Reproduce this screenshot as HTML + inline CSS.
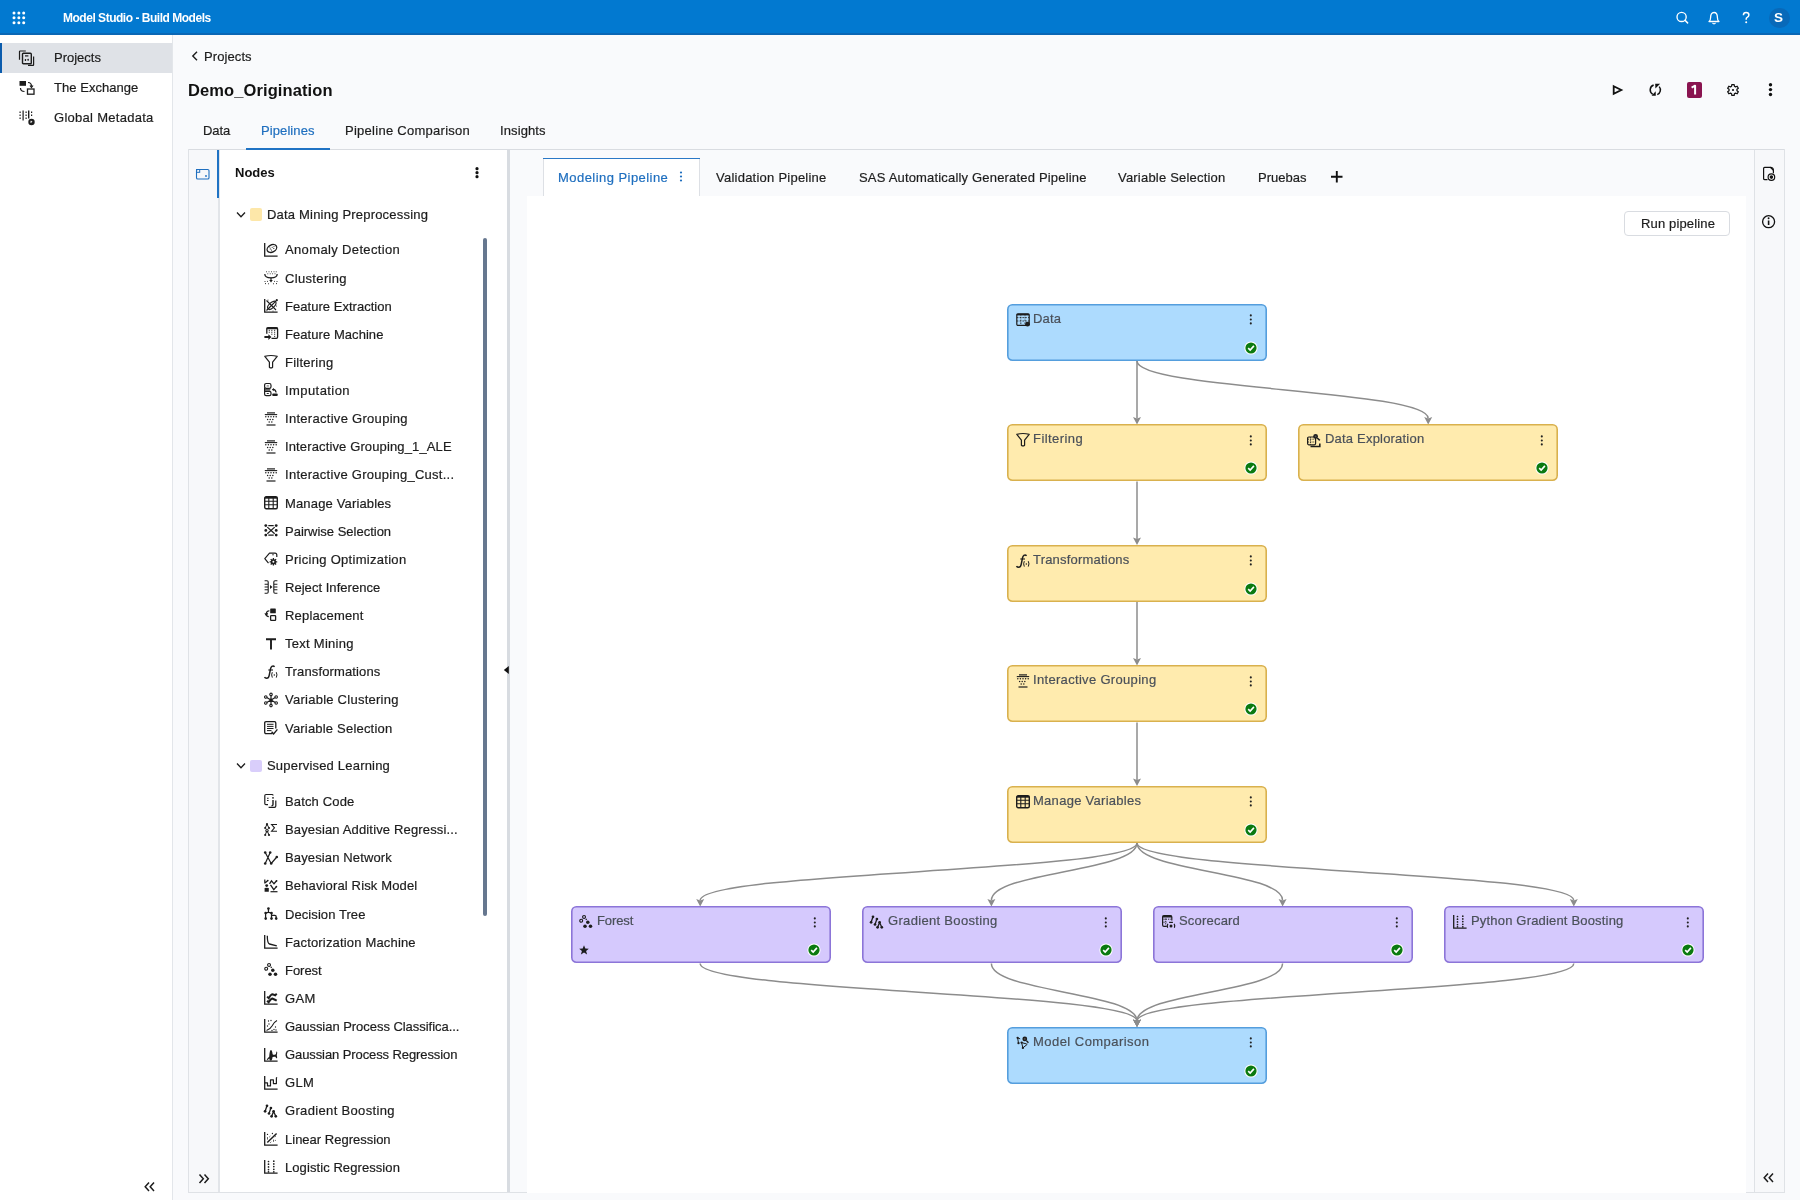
<!DOCTYPE html>
<html><head><meta charset="utf-8"><title>Model Studio - Build Models</title>
<style>
html,body{margin:0;padding:0;width:1800px;height:1200px;overflow:hidden;background:#f8f9fb}
body{position:relative;font-family:"Liberation Sans",sans-serif;-webkit-font-smoothing:antialiased}
.t{position:absolute;white-space:nowrap;line-height:1;font-family:"Liberation Sans",sans-serif;will-change:transform;-webkit-text-stroke:0.2px currentColor}
svg{overflow:visible}
</style></head><body>
<div style="position:absolute;left:0px;top:0px;width:1800px;height:1200px;background:#f9fafc"></div>
<div style="position:absolute;left:0px;top:0px;width:1800px;height:35px;background:#0279d0"></div>
<div style="position:absolute;left:0px;top:33px;width:1800px;height:2px;background:#0a67b5"></div>
<div style="position:absolute;left:0px;top:35px;width:172px;height:1165px;background:#ffffff"></div>
<div style="position:absolute;left:172px;top:35px;width:1px;height:1165px;background:#e3e6ea"></div>
<div style="position:absolute;left:0px;top:43px;width:172px;height:30px;background:#dfe2e7"></div>
<div style="position:absolute;left:0px;top:43px;width:2px;height:30px;background:#0b5cad"></div>
<svg style="position:absolute;left:11.5px;top:10.5px;" width="15" height="15" viewBox="0 0 15 15"><circle cx="2.00" cy="2.00" r="1.5" fill="#fff"/><circle cx="2.00" cy="6.85" r="1.5" fill="#fff"/><circle cx="2.00" cy="11.70" r="1.5" fill="#fff"/><circle cx="6.85" cy="2.00" r="1.5" fill="#fff"/><circle cx="6.85" cy="6.85" r="1.5" fill="#fff"/><circle cx="6.85" cy="11.70" r="1.5" fill="#fff"/><circle cx="11.70" cy="2.00" r="1.5" fill="#fff"/><circle cx="11.70" cy="6.85" r="1.5" fill="#fff"/><circle cx="11.70" cy="11.70" r="1.5" fill="#fff"/></svg>
<div class="t" style="left:63.00px;top:11.84px;font-size:12px;font-weight:700;color:#ffffff;letter-spacing:-0.48px;-webkit-text-stroke:0;">Model Studio - Build Models</div>
<svg style="position:absolute;left:1674px;top:10px;" width="16" height="16" viewBox="0 0 16 16"><circle cx="7.6" cy="6.9" r="4.6" fill="none" stroke="#fff" stroke-width="1.35"/><line x1="11" y1="10.3" x2="13.6" y2="12.9" stroke="#fff" stroke-width="1.5" stroke-linecap="round"/></svg>
<svg style="position:absolute;left:1706px;top:10px;" width="16" height="16" viewBox="0 0 16 16"><path d="M3 11.5 Q4.6 10.5 4.6 7.5 Q4.6 2.5 8 2.5 Q11.4 2.5 11.4 7.5 Q11.4 10.5 13 11.5 Z" fill="none" stroke="#fff" stroke-width="1.3" stroke-linejoin="round"/><path d="M6.3 13.2 Q8 14.8 9.7 13.2" fill="#fff" stroke="#fff" stroke-width="1"/></svg>
<svg style="position:absolute;left:1740px;top:10px;" width="12" height="16" viewBox="0 0 12 16"><path d="M3.4 5.3 Q3.4 2.6 6.1 2.6 Q8.9 2.6 8.9 5 Q8.9 6.6 6.9 7.6 Q6.2 8 6.2 9 V9.8" fill="none" stroke="#fff" stroke-width="1.5"/><circle cx="6.2" cy="12.2" r="1" fill="#fff"/></svg>
<div style="position:absolute;left:1769px;top:7.5px;width:20.5px;height:20.5px;background:#0869b9;border-radius:50%"></div>
<div class="t" style="left:1774.20px;top:10.77px;font-size:13.5px;font-weight:700;color:#ffffff;letter-spacing:0px;-webkit-text-stroke:0;">S</div>
<div class="t" style="left:54.30px;top:51.30px;font-size:13px;font-weight:400;color:#1d1d1d;letter-spacing:0px;">Projects</div>
<div class="t" style="left:53.60px;top:81.20px;font-size:13px;font-weight:400;color:#1d1d1d;letter-spacing:0.04px;">The Exchange</div>
<div class="t" style="left:54.00px;top:111.40px;font-size:13px;font-weight:400;color:#1d1d1d;letter-spacing:0.28px;">Global Metadata</div>
<svg style="position:absolute;left:18px;top:49px;" width="18" height="18" viewBox="0 0 18 18"><path d="M1.5 10.8 V2.6 Q1.5 2 2.2 2 H7.8" fill="none" stroke="#1d1d1d" stroke-width="1.2"/><rect x="4.5" y="4.3" width="8.8" height="10.5" rx="0.9" fill="none" stroke="#1d1d1d" stroke-width="1.4"/><path d="M10 16.4 H15.1 Q15.6 16.4 15.6 15.8 V7.5" fill="none" stroke="#1d1d1d" stroke-width="1.2"/><path d="M7 6.9 H10.4" fill="none" stroke="#1d1d1d" stroke-width="1.2"/><rect x="6.8" y="9.9" width="1.3" height="2" rx="0.5" fill="#1d1d1d"/><rect x="9.5" y="9.7" width="1.3" height="2" rx="0.5" fill="#1d1d1d"/></svg>
<svg style="position:absolute;left:18px;top:79px;" width="18" height="18" viewBox="0 0 18 18"><rect x="1.5" y="2" width="6.5" height="4.8" fill="#1d1d1d"/><rect x="9.5" y="10" width="6.5" height="5.2" fill="none" stroke="#1d1d1d" stroke-width="1.3"/><path d="M10 3.5 Q13.5 3.5 13.5 7.5" fill="none" stroke="#1d1d1d" stroke-width="1.2"/><path d="M2.5 9 Q2.5 12.5 6.5 12.5" fill="none" stroke="#1d1d1d" stroke-width="1.2"/><path d="M12 6.5 L13.5 8.5 L15 6.5" fill="none" stroke="#1d1d1d" stroke-width="1.2"/></svg>
<svg style="position:absolute;left:18px;top:109px;" width="18" height="18" viewBox="0 0 18 18"><g fill="#1d1d1d"><rect x="1.5" y="2.5" width="1.2" height="1.5"/><rect x="1.5" y="5.5" width="1.2" height="1.5"/><rect x="1.5" y="8.5" width="1.2" height="1.5"/><rect x="4.5" y="1.5" width="1.2" height="10"/><rect x="7.5" y="2.5" width="1.2" height="1.5"/><rect x="7.5" y="5.5" width="1.2" height="1.5"/><rect x="7.5" y="8.5" width="1.2" height="1.5"/><rect x="10" y="1.5" width="1.4" height="8"/><rect x="13" y="2.5" width="1.2" height="1.5"/><rect x="13" y="5.5" width="1.2" height="1.5"/><circle cx="13.5" cy="13" r="3.2"/></g><path d="M12 13 L14 13 L13.2 11.8" fill="none" stroke="#fff" stroke-width="0.9"/></svg>
<svg style="position:absolute;left:143px;top:1181px;" width="14" height="12" viewBox="0 0 14 12"><path d="M6 1.5 L2.2 5.8 L6 10 M11 1.5 L7.2 5.8 L11 10" fill="none" stroke="#1d1d1d" stroke-width="1.5"/></svg>
<svg style="position:absolute;left:189px;top:50px;" width="12" height="12" viewBox="0 0 12 12"><path d="M8 1.8 L3.8 6 L8 10.2" fill="none" stroke="#1d1d1d" stroke-width="1.4"/></svg>
<div class="t" style="left:204.40px;top:50.00px;font-size:13px;font-weight:400;color:#1d1d1d;letter-spacing:0.09px;">Projects</div>
<div class="t" style="left:187.80px;top:82.03px;font-size:16.5px;font-weight:700;color:#111;letter-spacing:0.1px;-webkit-text-stroke:0;">Demo_Origination</div>
<svg style="position:absolute;left:1610px;top:82px;" width="16" height="16" viewBox="0 0 16 16"><path d="M3.7 4.3 L11.3 8 L3.7 11.7 Z" fill="none" stroke="#111" stroke-width="1.8" stroke-linejoin="miter"/></svg>
<svg style="position:absolute;left:1648px;top:83px;" width="16" height="16" viewBox="0 0 16 16"><path d="M5.64 2.08 A5.1 5.1 0 0 0 4.75 11.32" fill="none" stroke="#111" stroke-width="1.5"/><path d="M11.21 3.62 A5.1 5.1 0 0 1 9.29 11.59" fill="none" stroke="#111" stroke-width="1.5"/><path d="M3.6 12.7 L7.8 12.7 L7.7 8.3 Z" fill="#111"/><path d="M7.2 0.8 L12.1 0.8 L7.4 5.6 Z" fill="#111"/></svg>
<div style="position:absolute;left:1686.8px;top:82px;width:15px;height:15.8px;background:#8a1450;border-radius:2px"></div>
<svg style="position:absolute;left:1686.8px;top:82px;" width="15" height="16" viewBox="0 0 15 16"><path d="M4.6 5.6 L8.1 3.7 V12.5" fill="none" stroke="#fff" stroke-width="2" stroke-linejoin="round"/></svg>
<svg style="position:absolute;left:1725.9px;top:83px;" width="16" height="16" viewBox="0 0 16 16"><path d="M5.59 3.26 L5.83 1.52 L8.17 1.52 L8.41 3.26 L9.54 3.91 L11.16 3.25 L12.33 5.27 L10.95 6.35 L10.95 7.65 L12.33 8.73 L11.16 10.75 L9.54 10.09 L8.41 10.74 L8.17 12.48 L5.83 12.48 L5.59 10.74 L4.46 10.09 L2.84 10.75 L1.67 8.73 L3.05 7.65 L3.05 6.35 L1.67 5.27 L2.84 3.25 L4.46 3.91Z" fill="none" stroke="#111" stroke-width="1.25" stroke-linejoin="round"/><circle cx="7" cy="7" r="1.1" fill="#111"/></svg>
<svg style="position:absolute;left:1766px;top:82px;" width="10" height="16" viewBox="0 0 10 16"><circle cx="4.5" cy="2.8" r="1.7" fill="#111"/><circle cx="4.5" cy="7.6" r="1.7" fill="#111"/><circle cx="4.5" cy="12.5" r="1.7" fill="#111"/></svg>
<div class="t" style="left:202.80px;top:124.00px;font-size:13px;font-weight:400;color:#1d1d1d;letter-spacing:-0.05px;">Data</div>
<div class="t" style="left:261.00px;top:124.00px;font-size:13px;font-weight:400;color:#1f6fbf;letter-spacing:0.09px;">Pipelines</div>
<div class="t" style="left:344.70px;top:124.00px;font-size:13px;font-weight:400;color:#1d1d1d;letter-spacing:0.27px;">Pipeline Comparison</div>
<div class="t" style="left:500.00px;top:124.00px;font-size:13px;font-weight:400;color:#1d1d1d;letter-spacing:0.11px;">Insights</div>
<div style="position:absolute;left:188px;top:149px;width:1597px;height:1px;background:#d9dce1"></div>
<div style="position:absolute;left:188px;top:149px;width:1px;height:1044px;background:#dfe2e6"></div>
<div style="position:absolute;left:188px;top:1192px;width:1597px;height:1px;background:#dfe2e6"></div>
<div style="position:absolute;left:1784px;top:149px;width:1px;height:1044px;background:#dfe2e6"></div>
<div style="position:absolute;left:246px;top:148px;width:83.5px;height:2.2px;background:#1f73c4"></div>
<div style="position:absolute;left:189px;top:150px;width:29px;height:1042px;background:#f7f8fa"></div>
<div style="position:absolute;left:218px;top:150px;width:1.5px;height:1042px;background:#e2e5e9"></div>
<div style="position:absolute;left:217px;top:150px;width:2px;height:48px;background:#1f73c4"></div>
<svg style="position:absolute;left:194px;top:167px;" width="18" height="14" viewBox="0 0 18 14"><rect x="2.5" y="2.5" width="12.5" height="9.5" rx="1.3" fill="none" stroke="#1f6fbf" stroke-width="1.1"/><rect x="2.5" y="2.5" width="3.2" height="2.8" fill="none" stroke="#1f6fbf" stroke-width="1"/><circle cx="12" cy="9" r="0.9" fill="#1f6fbf"/></svg>
<svg style="position:absolute;left:197px;top:1173px;" width="14" height="12" viewBox="0 0 14 12"><path d="M2.5 1.5 L6.3 5.8 L2.5 10 M7.5 1.5 L11.3 5.8 L7.5 10" fill="none" stroke="#1d1d1d" stroke-width="1.5"/></svg>
<div style="position:absolute;left:219.5px;top:150px;width:287.5px;height:1042px;background:#ffffff"></div>
<div style="position:absolute;left:507px;top:150px;width:3px;height:1042px;background:#d8dce1"></div>
<div class="t" style="left:235.00px;top:166.30px;font-size:13px;font-weight:700;color:#111;letter-spacing:0px;-webkit-text-stroke:0;">Nodes</div>
<svg style="position:absolute;left:472px;top:164px;" width="10" height="16" viewBox="0 0 10 16"><circle cx="5" cy="4.7" r="1.6" fill="#111"/><circle cx="5" cy="8.7" r="1.6" fill="#111"/><circle cx="5" cy="12.7" r="1.6" fill="#111"/></svg>
<div style="position:absolute;left:483px;top:238px;width:4px;height:678px;background:#66778f;border-radius:2px"></div>
<svg style="position:absolute;left:502px;top:665px;" width="8" height="10" viewBox="0 0 8 10"><path d="M6.8 1 L1.8 5 L6.8 9 Z" fill="#111"/></svg>
<svg style="position:absolute;left:235px;top:209.5px;" width="12" height="10" viewBox="0 0 12 10"><path d="M2 2.5 L6 6.8 L10 2.5" fill="none" stroke="#1d1d1d" stroke-width="1.3"/></svg>
<div style="position:absolute;left:249.5px;top:208.2px;width:12.7px;height:12.7px;background:#fde7a9;border-radius:2px"></div>
<div class="t" style="left:266.70px;top:208.00px;font-size:13px;font-weight:400;color:#1d1d1d;letter-spacing:0.2px;">Data Mining Preprocessing</div>
<svg style="position:absolute;left:264px;top:242.8px;" width="14" height="14" viewBox="0 0 14 14"><path d="M0.7 0 V13.2 H13.6" fill="none" stroke="#1d1d1d" stroke-width="1.3"/><ellipse cx="7.9" cy="5.5" rx="5.1" ry="3.6" transform="rotate(-28 7.9 5.5)" fill="none" stroke="#1d1d1d" stroke-width="1.3"/><circle cx="6.3" cy="5.9" r="0.55" fill="#1d1d1d"/><circle cx="8.2" cy="4.3" r="0.55" fill="#1d1d1d"/><circle cx="9.8" cy="5.4" r="0.55" fill="#1d1d1d"/><circle cx="7.6" cy="7.1" r="0.55" fill="#1d1d1d"/><circle cx="5.8" cy="4" r="0.55" fill="#1d1d1d"/><circle cx="10" cy="3.3" r="0.55" fill="#1d1d1d"/></svg>
<div class="t" style="left:284.90px;top:243.40px;font-size:13px;font-weight:400;color:#1d1d1d;letter-spacing:0.359px;">Anomaly Detection</div>
<svg style="position:absolute;left:264px;top:270.925px;" width="14" height="14" viewBox="0 0 14 14"><circle cx="2.5" cy="0.8" r="0.5" fill="#1d1d1d"/><circle cx="5" cy="0.8" r="0.5" fill="#1d1d1d"/><circle cx="7.5" cy="0.8" r="0.5" fill="#1d1d1d"/><circle cx="10" cy="0.8" r="0.5" fill="#1d1d1d"/><circle cx="12.2" cy="0.8" r="0.5" fill="#1d1d1d"/><circle cx="3.8" cy="2.8" r="0.5" fill="#1d1d1d"/><circle cx="6.2" cy="2.8" r="0.5" fill="#1d1d1d"/><circle cx="8.6" cy="2.8" r="0.5" fill="#1d1d1d"/><circle cx="11" cy="2.8" r="0.5" fill="#1d1d1d"/><path d="M0.8 3 Q0.8 6.8 7 6.8 Q13.2 6.8 13.2 3" fill="none" stroke="#1d1d1d" stroke-width="1.25"/><path d="M7 6.8 V9.5" fill="none" stroke="#1d1d1d" stroke-width="1.2"/><path d="M5.2 9 L7 11.6 L8.8 9Z" fill="#1d1d1d"/><circle cx="1" cy="10.5" r="0.55" fill="#1d1d1d"/><circle cx="3.5" cy="10.3" r="0.55" fill="#1d1d1d"/><circle cx="1.5" cy="12.6" r="0.55" fill="#1d1d1d"/><circle cx="4.5" cy="12.8" r="0.55" fill="#1d1d1d"/><circle cx="10.5" cy="10.3" r="0.55" fill="#1d1d1d"/><circle cx="13" cy="10.5" r="0.55" fill="#1d1d1d"/><circle cx="9.5" cy="12.8" r="0.55" fill="#1d1d1d"/><circle cx="12.5" cy="12.6" r="0.55" fill="#1d1d1d"/></svg>
<div class="t" style="left:284.90px;top:271.52px;font-size:13px;font-weight:400;color:#1d1d1d;letter-spacing:0.34px;">Clustering</div>
<svg style="position:absolute;left:264px;top:299.05px;" width="14" height="14" viewBox="0 0 14 14"><path d="M0.7 0 V13.2 H13.6" fill="none" stroke="#1d1d1d" stroke-width="1.3"/><ellipse cx="7.8" cy="6.3" rx="5.2" ry="2.6" transform="rotate(-45 7.8 6.3)" fill="none" stroke="#1d1d1d" stroke-width="1.1"/><path d="M2.5 11.5 L12.8 1.2" fill="none" stroke="#1d1d1d" stroke-width="1.2"/><path d="M2.5 1.5 L12 11" fill="none" stroke="#1d1d1d" stroke-width="1.1"/><circle cx="12.8" cy="1.2" r="1.1" fill="#1d1d1d"/><circle cx="12.5" cy="7" r="0.5" fill="#1d1d1d"/><circle cx="4" cy="1" r="0.5" fill="#1d1d1d"/><circle cx="9" cy="12" r="0.5" fill="#1d1d1d"/></svg>
<div class="t" style="left:284.90px;top:299.65px;font-size:13px;font-weight:400;color:#1d1d1d;letter-spacing:0.033px;">Feature Extraction</div>
<svg style="position:absolute;left:264px;top:327.175px;" width="14" height="14" viewBox="0 0 14 14"><path d="M2.8 6.8 V2 Q2.8 0.7 4.1 0.7 H12.3 Q13.6 0.7 13.6 2 V10 Q13.6 11.3 12.3 11.3 H7.5" fill="none" stroke="#1d1d1d" stroke-width="1.3"/><path d="M2.8 1.4 H13.6" fill="none" stroke="#1d1d1d" stroke-width="1.7"/><rect x="4.7" y="2.8499999999999996" width="1.2" height="0.9" fill="#1d1d1d"/><rect x="4.7" y="4.75" width="1.2" height="0.9" fill="#1d1d1d"/><rect x="7.2" y="2.8499999999999996" width="1.2" height="0.9" fill="#1d1d1d"/><rect x="7.2" y="4.75" width="1.2" height="0.9" fill="#1d1d1d"/><rect x="7.2" y="6.75" width="1.2" height="0.9" fill="#1d1d1d"/><rect x="10.0" y="2.8499999999999996" width="1.2" height="0.9" fill="#1d1d1d"/><rect x="10.0" y="4.75" width="1.2" height="0.9" fill="#1d1d1d"/><rect x="10.0" y="6.75" width="1.2" height="0.9" fill="#1d1d1d"/><rect x="10.0" y="8.850000000000001" width="1.2" height="0.9" fill="#1d1d1d"/><path d="M0.4 9.1 H4.4 V7.3 L7.4 10.1 L4.4 12.9 V11.1 H0.4 Z" fill="#1d1d1d"/></svg>
<div class="t" style="left:284.90px;top:327.77px;font-size:13px;font-weight:400;color:#1d1d1d;letter-spacing:0.06px;">Feature Machine</div>
<svg style="position:absolute;left:264px;top:355.3px;" width="14" height="14" viewBox="0 0 14 14"><path d="M0.8 1.3 Q7 -0.3 13.2 1.3 L8.6 7.2 V12.2 Q7 13.6 5.4 12.2 V7.2 Z" fill="none" stroke="#1d1d1d" stroke-width="1.2" stroke-linejoin="round"/></svg>
<div class="t" style="left:284.90px;top:355.90px;font-size:13px;font-weight:400;color:#1d1d1d;letter-spacing:0.244px;">Filtering</div>
<svg style="position:absolute;left:264px;top:383.425px;" width="14" height="14" viewBox="0 0 14 14"><path d="M2.2 0.5 H5.4 Q7 0.5 7 2.2 V3.8 Q7 5.4 5.4 5.4 H2.2 Q0.6 5.4 0.6 3.8 V2.2 Q0.6 0.5 2.2 0.5Z" fill="none" stroke="#1d1d1d" stroke-width="1.2"/><path d="M0.6 4.5 V11.2 Q0.6 12.6 2.2 12.6 H5.4 Q7 12.6 7 11.2 V9.8 Q7 8.4 5.4 8.4 H0.6" fill="none" stroke="#1d1d1d" stroke-width="1.2"/><path d="M0.6 6.9 H6.3" fill="none" stroke="#1d1d1d" stroke-width="1.2"/><ellipse cx="3.8" cy="2.9" rx="1.4" ry="0.7" fill="#1d1d1d" opacity="0.6"/><ellipse cx="3.8" cy="10.5" rx="1.3" ry="0.6" fill="#1d1d1d"/><path d="M9 6.3 Q11.8 6.6 12.1 9.5" fill="none" stroke="#1d1d1d" stroke-width="1.2"/><path d="M7.8 6.6 L10 5 L9.7 8.2Z" fill="#1d1d1d"/><rect x="8.2" y="10.6" width="5.6" height="2.5" rx="1.1" fill="#1d1d1d"/></svg>
<div class="t" style="left:284.90px;top:384.02px;font-size:13px;font-weight:400;color:#1d1d1d;letter-spacing:0.43px;">Imputation</div>
<svg style="position:absolute;left:264px;top:411.55px;" width="14" height="14" viewBox="0 0 14 14"><path d="M3 0.9 H11" fill="none" stroke="#1d1d1d" stroke-width="1.2"/><path d="M0.8 2.6 H13.2" fill="none" stroke="#1d1d1d" stroke-width="1.1"/><circle cx="1.8" cy="4.8" r="0.75" fill="#1d1d1d"/><circle cx="4.4" cy="4.8" r="0.75" fill="#1d1d1d"/><circle cx="7" cy="4.8" r="0.75" fill="#1d1d1d"/><circle cx="9.6" cy="4.8" r="0.75" fill="#1d1d1d"/><circle cx="12.2" cy="4.8" r="0.75" fill="#1d1d1d"/><circle cx="3.6" cy="7.4" r="0.75" fill="#1d1d1d"/><circle cx="6.2" cy="7.4" r="0.75" fill="#1d1d1d"/><circle cx="8.8" cy="7.4" r="0.75" fill="#1d1d1d"/><circle cx="5.2" cy="10" r="0.75" fill="#1d1d1d"/><circle cx="7.8" cy="10" r="0.75" fill="#1d1d1d"/><path d="M2.5 13 H11.5" fill="none" stroke="#1d1d1d" stroke-width="1.2"/></svg>
<div class="t" style="left:284.90px;top:412.15px;font-size:13px;font-weight:400;color:#1d1d1d;letter-spacing:0.29px;">Interactive Grouping</div>
<svg style="position:absolute;left:264px;top:439.675px;" width="14" height="14" viewBox="0 0 14 14"><path d="M3 0.9 H11" fill="none" stroke="#1d1d1d" stroke-width="1.2"/><path d="M0.8 2.6 H13.2" fill="none" stroke="#1d1d1d" stroke-width="1.1"/><circle cx="1.8" cy="4.8" r="0.75" fill="#1d1d1d"/><circle cx="4.4" cy="4.8" r="0.75" fill="#1d1d1d"/><circle cx="7" cy="4.8" r="0.75" fill="#1d1d1d"/><circle cx="9.6" cy="4.8" r="0.75" fill="#1d1d1d"/><circle cx="12.2" cy="4.8" r="0.75" fill="#1d1d1d"/><circle cx="3.6" cy="7.4" r="0.75" fill="#1d1d1d"/><circle cx="6.2" cy="7.4" r="0.75" fill="#1d1d1d"/><circle cx="8.8" cy="7.4" r="0.75" fill="#1d1d1d"/><circle cx="5.2" cy="10" r="0.75" fill="#1d1d1d"/><circle cx="7.8" cy="10" r="0.75" fill="#1d1d1d"/><path d="M2.5 13 H11.5" fill="none" stroke="#1d1d1d" stroke-width="1.2"/></svg>
<div class="t" style="left:284.90px;top:440.27px;font-size:13px;font-weight:400;color:#1d1d1d;letter-spacing:0.131px;">Interactive Grouping_1_ALE</div>
<svg style="position:absolute;left:264px;top:467.8px;" width="14" height="14" viewBox="0 0 14 14"><path d="M3 0.9 H11" fill="none" stroke="#1d1d1d" stroke-width="1.2"/><path d="M0.8 2.6 H13.2" fill="none" stroke="#1d1d1d" stroke-width="1.1"/><circle cx="1.8" cy="4.8" r="0.75" fill="#1d1d1d"/><circle cx="4.4" cy="4.8" r="0.75" fill="#1d1d1d"/><circle cx="7" cy="4.8" r="0.75" fill="#1d1d1d"/><circle cx="9.6" cy="4.8" r="0.75" fill="#1d1d1d"/><circle cx="12.2" cy="4.8" r="0.75" fill="#1d1d1d"/><circle cx="3.6" cy="7.4" r="0.75" fill="#1d1d1d"/><circle cx="6.2" cy="7.4" r="0.75" fill="#1d1d1d"/><circle cx="8.8" cy="7.4" r="0.75" fill="#1d1d1d"/><circle cx="5.2" cy="10" r="0.75" fill="#1d1d1d"/><circle cx="7.8" cy="10" r="0.75" fill="#1d1d1d"/><path d="M2.5 13 H11.5" fill="none" stroke="#1d1d1d" stroke-width="1.2"/></svg>
<div class="t" style="left:284.90px;top:468.40px;font-size:13px;font-weight:400;color:#1d1d1d;letter-spacing:0.268px;">Interactive Grouping_Cust...</div>
<svg style="position:absolute;left:264px;top:495.925px;" width="14" height="14" viewBox="0 0 14 14"><rect x="0.7" y="0.8" width="12.6" height="12" rx="1.5" fill="none" stroke="#1d1d1d" stroke-width="1.4"/><path d="M0.7 1.8 H13.3" fill="none" stroke="#1d1d1d" stroke-width="1.8"/><path d="M0.7 5.2 H13.3 M0.7 8.8 H13.3 M4.8 0.8 V12.8 M9.2 0.8 V12.8" fill="none" stroke="#1d1d1d" stroke-width="1.1"/></svg>
<div class="t" style="left:284.90px;top:496.52px;font-size:13px;font-weight:400;color:#1d1d1d;letter-spacing:0.153px;">Manage Variables</div>
<svg style="position:absolute;left:264px;top:524.05px;" width="14" height="14" viewBox="0 0 14 14"><circle cx="1.8" cy="1.6" r="1.4" fill="#1d1d1d"/><circle cx="12.2" cy="1.6" r="1.4" fill="#1d1d1d"/><circle cx="1.8" cy="6.4" r="1.4" fill="#1d1d1d"/><circle cx="12.2" cy="6.4" r="1.4" fill="#1d1d1d"/><circle cx="1.8" cy="11.1" r="1.4" fill="#1d1d1d"/><circle cx="12.2" cy="11.1" r="1.4" fill="#1d1d1d"/><path d="M3.3 3.1 Q7 6.4 10.7 9.7 M10.7 3.1 Q7 6.4 3.3 9.7 M4.3 1.6 H9.7 M4.3 11.1 H9.7" fill="none" stroke="#1d1d1d" stroke-width="1.25"/></svg>
<div class="t" style="left:284.90px;top:524.65px;font-size:13px;font-weight:400;color:#1d1d1d;letter-spacing:-0.008px;">Pairwise Selection</div>
<svg style="position:absolute;left:264px;top:552.175px;" width="14" height="14" viewBox="0 0 14 14"><path d="M12.8 5 V3 Q12.8 1.2 11 1.2 H5.5 L0.8 6.6 L4.5 11.2" fill="none" stroke="#1d1d1d" stroke-width="1.2" stroke-linejoin="round"/><circle cx="9" cy="2.8" r="0.7" fill="#1d1d1d"/><circle cx="9.4" cy="9.8" r="2.6" fill="#1d1d1d"/><path d="M9.4 6 V13.6 M5.6 9.8 H13.2 M6.7 7.1 L12.1 12.5 M12.1 7.1 L6.7 12.5" stroke="#1d1d1d" stroke-width="1.3"/><circle cx="9.4" cy="9.8" r="1" fill="#fff"/></svg>
<div class="t" style="left:284.90px;top:552.77px;font-size:13px;font-weight:400;color:#1d1d1d;letter-spacing:0.29px;">Pricing Optimization</div>
<svg style="position:absolute;left:264px;top:580.3px;" width="14" height="14" viewBox="0 0 14 14"><path d="M0.6 0.8 H3 Q4.2 0.8 4.2 2 V12 Q4.2 13.2 3 13.2 H0.6 M0.6 4.3 H4 M0.6 7 H4 M0.6 9.7 H4" fill="none" stroke="#1d1d1d" stroke-width="1.1"/><path d="M13.4 0.8 H11 Q9.8 0.8 9.8 2 V12 Q9.8 13.2 11 13.2 H13.4 M10 4.3 H13.4 M10 7 H13.4 M10 9.7 H13.4" fill="none" stroke="#1d1d1d" stroke-width="1.1"/><path d="M6 5 L8.5 7 L6 9Z" fill="#1d1d1d"/></svg>
<div class="t" style="left:284.90px;top:580.90px;font-size:13px;font-weight:400;color:#1d1d1d;letter-spacing:0.037px;">Reject Inference</div>
<svg style="position:absolute;left:264px;top:608.425px;" width="14" height="14" viewBox="0 0 14 14"><rect x="6.2" y="0.4" width="5.6" height="4.9" rx="0.6" fill="#1d1d1d"/><rect x="6.6" y="7.7" width="5" height="4.7" rx="0.6" fill="none" stroke="#1d1d1d" stroke-width="1.3"/><path d="M5.4 2.8 Q2.3 3 2.3 6 Q2.3 8.4 4.8 8.6" fill="none" stroke="#1d1d1d" stroke-width="1.15"/><path d="M0.9 5.2 L2.3 7.4 L3.7 5.2" fill="none" stroke="#1d1d1d" stroke-width="1.1"/></svg>
<div class="t" style="left:284.90px;top:609.02px;font-size:13px;font-weight:400;color:#1d1d1d;letter-spacing:0.177px;">Replacement</div>
<svg style="position:absolute;left:264px;top:636.55px;" width="14" height="14" viewBox="0 0 14 14"><path d="M2 2.2 H12 M7 2.2 V12.6" stroke="#1d1d1d" stroke-width="1.9"/></svg>
<div class="t" style="left:284.90px;top:637.15px;font-size:13px;font-weight:400;color:#1d1d1d;letter-spacing:0.268px;">Text Mining</div>
<svg style="position:absolute;left:264px;top:664.675px;" width="14" height="14" viewBox="0 0 14 14"><path d="M10.6 1.8 Q9.4 0.4 7.9 1.3 Q6.9 2 6.5 4 L5.2 10.4 Q4.7 13.3 2.6 13.3 Q1.1 13.3 0.5 12.2" fill="none" stroke="#1d1d1d" stroke-width="1.45"/><path d="M4.3 5 H9" fill="none" stroke="#1d1d1d" stroke-width="1.1"/><path d="M8.3 7.2 Q7 9.8 8.3 12.6 M12.3 7.2 Q13.6 9.8 12.3 12.6" fill="none" stroke="#1d1d1d" stroke-width="1"/><circle cx="10.3" cy="9.9" r="0.75" fill="#1d1d1d"/></svg>
<div class="t" style="left:284.90px;top:665.27px;font-size:13px;font-weight:400;color:#1d1d1d;letter-spacing:0.133px;">Transformations</div>
<svg style="position:absolute;left:264px;top:692.8px;" width="14" height="14" viewBox="0 0 14 14"><path d="M7 7 L7 1.5 M7 7 L2.3 4.2 M7 7 L11.7 4.2 M7 7 L2.3 9.8 M7 7 L11.7 9.8 M7 7 L7 12.5" fill="none" stroke="#1d1d1d" stroke-width="1.2"/><circle cx="7" cy="7" r="1.5" fill="#1d1d1d"/><circle cx="7" cy="1.4" r="1.25" fill="#fff" stroke="#1d1d1d" stroke-width="1.1"/><circle cx="1.8" cy="4" r="1.25" fill="#fff" stroke="#1d1d1d" stroke-width="1.1"/><circle cx="12.2" cy="4" r="1.25" fill="#fff" stroke="#1d1d1d" stroke-width="1.1"/><circle cx="1.8" cy="10" r="1.25" fill="#fff" stroke="#1d1d1d" stroke-width="1.1"/><circle cx="12.2" cy="10" r="1.25" fill="#fff" stroke="#1d1d1d" stroke-width="1.1"/><circle cx="7" cy="12.6" r="1.25" fill="#fff" stroke="#1d1d1d" stroke-width="1.1"/></svg>
<div class="t" style="left:284.90px;top:693.40px;font-size:13px;font-weight:400;color:#1d1d1d;letter-spacing:0.253px;">Variable Clustering</div>
<svg style="position:absolute;left:264px;top:720.925px;" width="14" height="14" viewBox="0 0 14 14"><path d="M8.5 12.6 H2 Q0.7 12.6 0.7 11.3 V2 Q0.7 0.7 2 0.7 H10.5 Q11.8 0.7 11.8 2 V7.5" fill="none" stroke="#1d1d1d" stroke-width="1.3"/><path d="M3 3.3 H9.5 M3 5.4 H9.5 M3 7.5 H9.5 M3 9.6 H7.5" fill="none" stroke="#1d1d1d" stroke-width="1"/><path d="M7.6 10.8 L9.6 13 L13.4 8.4" fill="none" stroke="#1d1d1d" stroke-width="1.4"/></svg>
<div class="t" style="left:284.90px;top:721.52px;font-size:13px;font-weight:400;color:#1d1d1d;letter-spacing:0.194px;">Variable Selection</div>
<svg style="position:absolute;left:235px;top:760.9px;" width="12" height="10" viewBox="0 0 12 10"><path d="M2 2.5 L6 6.8 L10 2.5" fill="none" stroke="#1d1d1d" stroke-width="1.3"/></svg>
<div style="position:absolute;left:249.5px;top:759.6px;width:12.7px;height:12.7px;background:#d9cefb;border-radius:2px"></div>
<div class="t" style="left:266.70px;top:759.40px;font-size:13px;font-weight:400;color:#1d1d1d;letter-spacing:0.2px;">Supervised Learning</div>
<svg style="position:absolute;left:264px;top:794.4px;" width="14" height="14" viewBox="0 0 14 14"><path d="M9 1.5 V1.2 Q9 0.5 8 0.5 H2 Q0.8 0.5 0.8 1.7 V9.5 Q0.8 10.6 2 10.6 H4" fill="none" stroke="#1d1d1d" stroke-width="1.2"/><path d="M11.8 6.5 V12 Q11.8 13.4 10.4 13.4 H4.6" fill="none" stroke="#1d1d1d" stroke-width="1.2"/><path d="M3 4.3 H4.6 M3 6.5 H4.6" fill="none" stroke="#1d1d1d" stroke-width="1.1"/><circle cx="9" cy="3.8" r="0.9" fill="#1d1d1d"/><path d="M9 6 V10.5 Q9 11.8 7.5 11.8" fill="none" stroke="#1d1d1d" stroke-width="1.4"/></svg>
<div class="t" style="left:284.90px;top:795.00px;font-size:13px;font-weight:400;color:#1d1d1d;letter-spacing:0.15px;">Batch Code</div>
<svg style="position:absolute;left:264px;top:822.525px;" width="14" height="14" viewBox="0 0 14 14"><circle cx="3" cy="1.2" r="1.1" fill="#1d1d1d"/><circle cx="1.2" cy="5" r="1.1" fill="#1d1d1d"/><circle cx="5" cy="5" r="1.1" fill="#1d1d1d"/><circle cx="1.2" cy="12" r="1.1" fill="#1d1d1d"/><circle cx="5" cy="12" r="1.1" fill="#1d1d1d"/><path d="M3 1.2 L1.2 5 M3 1.2 L5 5 M3 7.5 L1.2 12 M3 7.5 L5 12" fill="none" stroke="#1d1d1d" stroke-width="1"/><circle cx="3" cy="7.6" r="1.4" fill="none" stroke="#1d1d1d" stroke-width="0.9"/><path d="M13 1.5 H7.6 L10.5 4.8 L7.6 8.2 H13" fill="none" stroke="#1d1d1d" stroke-width="1.1"/></svg>
<div class="t" style="left:284.90px;top:823.12px;font-size:13px;font-weight:400;color:#1d1d1d;letter-spacing:0.152px;">Bayesian Additive Regressi...</div>
<svg style="position:absolute;left:264px;top:850.65px;" width="14" height="14" viewBox="0 0 14 14"><path d="M1.2 1.5 L7.2 12.5 M6.2 1.5 L1.2 12.5 M7.2 12.5 L12.8 6" fill="none" stroke="#1d1d1d" stroke-width="1.2"/><circle cx="1.2" cy="1.5" r="1.3" fill="#1d1d1d"/><circle cx="6.2" cy="1.5" r="1.3" fill="#1d1d1d"/><circle cx="1.2" cy="12.5" r="1.3" fill="#1d1d1d"/><circle cx="7.2" cy="12.5" r="1.3" fill="#1d1d1d"/><circle cx="12.8" cy="6" r="1.3" fill="#1d1d1d"/></svg>
<div class="t" style="left:284.90px;top:851.25px;font-size:13px;font-weight:400;color:#1d1d1d;letter-spacing:0.138px;">Bayesian Network</div>
<svg style="position:absolute;left:264px;top:878.775px;" width="14" height="14" viewBox="0 0 14 14"><path d="M0.8 0.4 V4.6 M1.3 3.8 L3.8 1.5" fill="none" stroke="#1d1d1d" stroke-width="1.2"/><path d="M5.5 4.8 L7.5 1.8 L10 4.8 L12.6 1.8 M6.5 5.8 L9.8 10.6 L12.4 7.6" fill="none" stroke="#1d1d1d" stroke-width="1.3"/><circle cx="12.6" cy="1.8" r="0.85" fill="#1d1d1d"/><circle cx="12.4" cy="7.6" r="0.85" fill="#1d1d1d"/><circle cx="3.8" cy="1.5" r="0.85" fill="#1d1d1d"/><circle cx="2.7" cy="6.6" r="1.45" fill="#1d1d1d"/><path d="M0.6 9.1 Q2.7 8.4 4.8 9.1 V12.8 H0.6Z" fill="#1d1d1d"/><path d="M6.5 12.7 H13.5" fill="none" stroke="#1d1d1d" stroke-width="1.2"/></svg>
<div class="t" style="left:284.90px;top:879.37px;font-size:13px;font-weight:400;color:#1d1d1d;letter-spacing:0.143px;">Behavioral Risk Model</div>
<svg style="position:absolute;left:264px;top:906.9px;" width="14" height="14" viewBox="0 0 14 14"><circle cx="4.45" cy="1.5" r="1.3" fill="#1d1d1d"/><circle cx="1.6" cy="6" r="1.3" fill="#1d1d1d"/><circle cx="7.5" cy="6" r="1.3" fill="#1d1d1d"/><circle cx="1.7" cy="11.6" r="1.3" fill="#1d1d1d"/><circle cx="7.5" cy="11.6" r="1.3" fill="#1d1d1d"/><circle cx="12.2" cy="11.6" r="1.3" fill="#1d1d1d"/><path d="M4.45 1.5 L4.45 5.2 M1.6 6 Q4.5 4.6 7.5 6 M1.6 6 V11.6 M7.5 6 V11.6 M7.5 8.4 H10.8 Q12.2 8.4 12.2 9.8 V11.6" fill="none" stroke="#1d1d1d" stroke-width="1.25"/></svg>
<div class="t" style="left:284.90px;top:907.50px;font-size:13px;font-weight:400;color:#1d1d1d;letter-spacing:0.077px;">Decision Tree</div>
<svg style="position:absolute;left:264px;top:935.025px;" width="14" height="14" viewBox="0 0 14 14"><path d="M0.7 0 V13.2 H13.6" fill="none" stroke="#1d1d1d" stroke-width="1.3"/><path d="M3.3 0.8 Q3.3 8.5 5.5 9 L12.8 10.8" fill="none" stroke="#1d1d1d" stroke-width="1.3"/></svg>
<div class="t" style="left:284.90px;top:935.62px;font-size:13px;font-weight:400;color:#1d1d1d;letter-spacing:0.171px;">Factorization Machine</div>
<svg style="position:absolute;left:264px;top:963.15px;" width="14" height="14" viewBox="0 0 14 14"><circle cx="5.05" cy="1.9" r="1.45" fill="none" stroke="#1d1d1d" stroke-width="1.15"/><circle cx="2.2" cy="5.7" r="1.45" fill="none" stroke="#1d1d1d" stroke-width="1.15"/><path d="M6.7 4.7 L7.9 4.1" fill="none" stroke="#1d1d1d" stroke-width="1.1"/><circle cx="8.8" cy="7.25" r="1.75" fill="#1d1d1d"/><circle cx="6" cy="11.15" r="1.75" fill="#1d1d1d"/><circle cx="11.5" cy="11.15" r="1.75" fill="#1d1d1d"/></svg>
<div class="t" style="left:284.90px;top:963.75px;font-size:13px;font-weight:400;color:#1d1d1d;letter-spacing:-0.033px;">Forest</div>
<svg style="position:absolute;left:264px;top:991.275px;" width="14" height="14" viewBox="0 0 14 14"><path d="M0.7 0 V13.2 H13.6" fill="none" stroke="#1d1d1d" stroke-width="1.3"/><path d="M3.1 5.6 L4.7 7.2 Q6.5 3.8 8.2 3.2 Q10 3.6 11.3 4.3 L12.7 2.6" fill="none" stroke="#1d1d1d" stroke-width="1.9"/><path d="M3.1 9.8 L4.6 11.2 Q6.6 8 8.2 7.6 Q10.4 8.4 12.7 9.7" fill="none" stroke="#1d1d1d" stroke-width="2.1"/></svg>
<div class="t" style="left:284.90px;top:991.87px;font-size:13px;font-weight:400;color:#1d1d1d;letter-spacing:0.3px;">GAM</div>
<svg style="position:absolute;left:264px;top:1019.4000000000001px;" width="14" height="14" viewBox="0 0 14 14"><path d="M0.7 0 V13.2 H13.6" fill="none" stroke="#1d1d1d" stroke-width="1.3"/><path d="M2.5 11.5 Q6 10.5 8 7 Q10 3 13 1.5" fill="none" stroke="#1d1d1d" stroke-width="1.1"/><circle cx="4.5" cy="2" r="0.65" fill="#1d1d1d"/><circle cx="7" cy="1.5" r="0.65" fill="#1d1d1d"/><circle cx="5" cy="5" r="0.65" fill="#1d1d1d"/><circle cx="3.5" cy="7" r="0.65" fill="#1d1d1d"/><circle cx="10" cy="10.5" r="0.65" fill="#1d1d1d"/><circle cx="11.5" cy="8" r="0.65" fill="#1d1d1d"/><circle cx="8" cy="11.5" r="0.65" fill="#1d1d1d"/><circle cx="12" cy="11" r="0.65" fill="#1d1d1d"/></svg>
<div class="t" style="left:284.90px;top:1020.00px;font-size:13px;font-weight:400;color:#1d1d1d;letter-spacing:-0.04px;">Gaussian Process Classifica...</div>
<svg style="position:absolute;left:264px;top:1047.525px;" width="14" height="14" viewBox="0 0 14 14"><path d="M0.7 0 V13.2 H13.6" fill="none" stroke="#1d1d1d" stroke-width="1.3"/><path d="M2.9 11.2 Q4.2 9.8 5.2 8.8 Q5.6 2.2 6.9 2 Q8.2 2.2 8.6 6.2 Q10 7.6 12 6 L12.4 3.4 Q13.4 3.2 13.2 5 L12.8 7.2 Q13.6 9.6 12.8 10.4 Q11.8 10.2 11.4 8.8 Q10 8.4 8.6 9 Q8 12.8 6.9 12.8 Q5.6 12.8 5.2 10.6 Q4.3 11.8 2.9 12.2Z" fill="#1d1d1d"/></svg>
<div class="t" style="left:284.90px;top:1048.12px;font-size:13px;font-weight:400;color:#1d1d1d;letter-spacing:-0.093px;">Gaussian Process Regression</div>
<svg style="position:absolute;left:264px;top:1075.65px;" width="14" height="14" viewBox="0 0 14 14"><path d="M0.7 0 V13.2 H13.6" fill="none" stroke="#1d1d1d" stroke-width="1.3"/><path d="M1 6.9 H3.5 V9.9 H6.5 V3.9 H9.4 V7.6 H12.4 V2 L13 1.4" fill="none" stroke="#1d1d1d" stroke-width="1.2" stroke-linejoin="round"/></svg>
<div class="t" style="left:284.90px;top:1076.25px;font-size:13px;font-weight:400;color:#1d1d1d;letter-spacing:0.333px;">GLM</div>
<svg style="position:absolute;left:264px;top:1103.775px;" width="14" height="14" viewBox="0 0 14 14"><path d="M3 1.8 L1.1 7.3 M6.9 4 L5 9.5 M9.6 7.5 L7.6 12.3 M9.6 7.5 L11.8 12.3" fill="none" stroke="#1d1d1d" stroke-width="1.3"/><circle cx="3" cy="1.8" r="1.35" fill="#1d1d1d"/><circle cx="1.1" cy="7.3" r="1.35" fill="#1d1d1d"/><circle cx="6.9" cy="4" r="1.35" fill="#1d1d1d"/><circle cx="5" cy="9.5" r="1.35" fill="#1d1d1d"/><circle cx="9.6" cy="7.3" r="1.35" fill="#1d1d1d"/><circle cx="7.6" cy="12.3" r="1.35" fill="#1d1d1d"/><circle cx="11.8" cy="12.3" r="1.35" fill="#1d1d1d"/></svg>
<div class="t" style="left:284.90px;top:1104.37px;font-size:13px;font-weight:400;color:#1d1d1d;letter-spacing:0.341px;">Gradient Boosting</div>
<svg style="position:absolute;left:264px;top:1131.9px;" width="14" height="14" viewBox="0 0 14 14"><path d="M0.7 0 V13.2 H13.6" fill="none" stroke="#1d1d1d" stroke-width="1.3"/><path d="M3.3 10.6 L12.6 1.4" fill="none" stroke="#1d1d1d" stroke-width="1.45"/><path d="M3.5 5.1 V7.6 M9.5 7.6 V9.8 M11.4 7.9 V8.9 M5.2 5.2 L6.4 4 M10.8 5 L11.9 4 M6.2 10.8 L7.3 9.8" stroke="#1d1d1d" stroke-width="1" opacity="0.7"/><circle cx="3.5" cy="2.4" r="0.65" fill="#1d1d1d"/><circle cx="8.4" cy="1.5" r="0.65" fill="#1d1d1d"/></svg>
<div class="t" style="left:284.90px;top:1132.50px;font-size:13px;font-weight:400;color:#1d1d1d;letter-spacing:0.006px;">Linear Regression</div>
<svg style="position:absolute;left:264px;top:1160.025px;" width="14" height="14" viewBox="0 0 14 14"><path d="M0.7 0 V13.2 H13.6" fill="none" stroke="#1d1d1d" stroke-width="1.3"/><circle cx="4.5" cy="1.5" r="0.85" fill="#1d1d1d"/><circle cx="4.5" cy="4.2" r="0.85" fill="#1d1d1d"/><circle cx="4.5" cy="6.9" r="0.85" fill="#1d1d1d"/><circle cx="4.5" cy="9.6" r="0.85" fill="#1d1d1d"/><circle cx="4.5" cy="11.8" r="0.85" fill="#1d1d1d"/><circle cx="9.8" cy="1.2" r="0.85" fill="#1d1d1d"/><circle cx="9.8" cy="3.9" r="0.85" fill="#1d1d1d"/><circle cx="9.8" cy="6.6" r="0.85" fill="#1d1d1d"/><circle cx="9.8" cy="9.3" r="0.85" fill="#1d1d1d"/><circle cx="9.8" cy="11.8" r="0.85" fill="#1d1d1d"/></svg>
<div class="t" style="left:284.90px;top:1160.62px;font-size:13px;font-weight:400;color:#1d1d1d;letter-spacing:0.079px;">Logistic Regression</div>
<div style="position:absolute;left:542.5px;top:158px;width:157px;height:38px;background:#ffffff;border:1px solid #dde0e5;border-bottom:none;box-sizing:border-box"></div>
<div style="position:absolute;left:542.5px;top:158px;width:157px;height:1.3px;background:#2a78c6"></div>
<div class="t" style="left:558.00px;top:171.00px;font-size:13px;font-weight:400;color:#1f6fbf;letter-spacing:0.45px;">Modeling Pipeline</div>
<svg style="position:absolute;left:677px;top:170px;" width="8" height="14" viewBox="0 0 8 14"><circle cx="4" cy="2.5" r="1.1" fill="#1f6fbf"/><circle cx="4" cy="6.5" r="1.1" fill="#1f6fbf"/><circle cx="4" cy="10.5" r="1.1" fill="#1f6fbf"/></svg>
<div class="t" style="left:716.00px;top:171.00px;font-size:13px;font-weight:400;color:#1d1d1d;letter-spacing:0.24px;">Validation Pipeline</div>
<div class="t" style="left:859.00px;top:171.00px;font-size:13px;font-weight:400;color:#1d1d1d;letter-spacing:0.18px;">SAS Automatically Generated Pipeline</div>
<div class="t" style="left:1118.30px;top:171.00px;font-size:13px;font-weight:400;color:#1d1d1d;letter-spacing:0.2px;">Variable Selection</div>
<div class="t" style="left:1258.30px;top:171.00px;font-size:13px;font-weight:400;color:#1d1d1d;letter-spacing:0px;">Pruebas</div>
<svg style="position:absolute;left:1329px;top:169px;" width="16" height="16" viewBox="0 0 16 16"><path d="M7.8 2 V13.5 M2 7.8 H13.5" stroke="#111" stroke-width="1.9"/></svg>
<div style="position:absolute;left:527px;top:196px;width:1219px;height:997px;background:#ffffff"></div>
<div style="position:absolute;left:1754px;top:150px;width:1.3px;height:1043px;background:#dfe2e6"></div>
<div style="position:absolute;left:1755.3px;top:150px;width:29px;height:1042px;background:#f7f8fa"></div>
<svg style="position:absolute;left:1760.5px;top:166px;" width="18" height="18" viewBox="0 0 18 18"><path d="M6.5 13.6 H3.6 Q2.6 13.6 2.6 12.6 V2.4 Q2.6 1.4 3.6 1.4 H9.4 L12.4 4.4 V7.2" fill="none" stroke="#111" stroke-width="1.2"/><path d="M9.4 1.4 Q12.4 1.4 12.4 4.4" fill="none" stroke="#111" stroke-width="1.2"/><circle cx="10.4" cy="11.1" r="3.3" fill="#fff" stroke="#111" stroke-width="1.2"/><circle cx="10.4" cy="11.1" r="1.8" fill="#111"/></svg>
<svg style="position:absolute;left:1760px;top:213px;" width="18" height="18" viewBox="0 0 18 18"><circle cx="8.6" cy="8.7" r="6" fill="none" stroke="#111" stroke-width="1.3"/><line x1="8.6" y1="7.5" x2="8.6" y2="12" stroke="#111" stroke-width="1.6"/><circle cx="8.6" cy="5.2" r="0.95" fill="#111"/></svg>
<svg style="position:absolute;left:1762px;top:1172px;" width="14" height="12" viewBox="0 0 14 12"><path d="M6 1.5 L2.2 5.8 L6 10 M11 1.5 L7.2 5.8 L11 10" fill="none" stroke="#1d1d1d" stroke-width="1.5"/></svg>
<div style="position:absolute;left:1624.3px;top:210.7px;width:106px;height:25.6px;background:#fff;border:1px solid #d9dce1;border-radius:4px;box-sizing:border-box"></div>
<div class="t" style="left:1640.60px;top:217.20px;font-size:13px;font-weight:400;color:#1d1d1d;letter-spacing:0.15px;">Run pipeline</div>
<svg style="position:absolute;left:0px;top:0px;pointer-events:none" width="1800" height="1200" viewBox="0 0 1800 1200"><path d="M1137 360.9 L1137 418.4" fill="none" stroke="#8c8c8c" stroke-width="1.5"/><path d="M1137 360.9 C1137 389.65 1428.2 389.65 1428.2 418.4" fill="none" stroke="#8c8c8c" stroke-width="1.5"/><path d="M1137 481.4 L1137 538.9" fill="none" stroke="#8c8c8c" stroke-width="1.5"/><path d="M1137 601.9 L1137 659.4" fill="none" stroke="#8c8c8c" stroke-width="1.5"/><path d="M1137 722.4 L1137 779.9" fill="none" stroke="#8c8c8c" stroke-width="1.5"/><path d="M1137 842.9 C1137 871.65 700.2 871.65 700.2 900.4" fill="none" stroke="#8c8c8c" stroke-width="1.5"/><path d="M700.2 963.4 C700.2 992.1500000000001 1137 992.1500000000001 1137 1020.9000000000001" fill="none" stroke="#8c8c8c" stroke-width="1.5"/><path d="M1137 842.9 C1137 871.65 991.4 871.65 991.4 900.4" fill="none" stroke="#8c8c8c" stroke-width="1.5"/><path d="M991.4 963.4 C991.4 992.1500000000001 1137 992.1500000000001 1137 1020.9000000000001" fill="none" stroke="#8c8c8c" stroke-width="1.5"/><path d="M1137 842.9 C1137 871.65 1282.6 871.65 1282.6 900.4" fill="none" stroke="#8c8c8c" stroke-width="1.5"/><path d="M1282.6 963.4 C1282.6 992.1500000000001 1137 992.1500000000001 1137 1020.9000000000001" fill="none" stroke="#8c8c8c" stroke-width="1.5"/><path d="M1137 842.9 C1137 871.65 1573.8 871.65 1573.8 900.4" fill="none" stroke="#8c8c8c" stroke-width="1.5"/><path d="M1573.8 963.4 C1573.8 992.1500000000001 1137 992.1500000000001 1137 1020.9000000000001" fill="none" stroke="#8c8c8c" stroke-width="1.5"/><path d="M1133 416.9 L1137 424.4 L1141 416.9 L1137 418.4 Z" fill="#8c8c8c"/><path d="M1424.2 416.9 L1428.2 424.4 L1432.2 416.9 L1428.2 418.4 Z" fill="#8c8c8c"/><path d="M1133 537.4 L1137 544.9 L1141 537.4 L1137 538.9 Z" fill="#8c8c8c"/><path d="M1133 657.9 L1137 665.4 L1141 657.9 L1137 659.4 Z" fill="#8c8c8c"/><path d="M1133 778.4 L1137 785.9 L1141 778.4 L1137 779.9 Z" fill="#8c8c8c"/><path d="M696.2 898.9 L700.2 906.4 L704.2 898.9 L700.2 900.4 Z" fill="#8c8c8c"/><path d="M1133 1019.4000000000001 L1137 1026.9 L1141 1019.4000000000001 L1137 1020.9000000000001 Z" fill="#8c8c8c"/><path d="M987.4 898.9 L991.4 906.4 L995.4 898.9 L991.4 900.4 Z" fill="#8c8c8c"/><path d="M1133 1019.4000000000001 L1137 1026.9 L1141 1019.4000000000001 L1137 1020.9000000000001 Z" fill="#8c8c8c"/><path d="M1278.6 898.9 L1282.6 906.4 L1286.6 898.9 L1282.6 900.4 Z" fill="#8c8c8c"/><path d="M1133 1019.4000000000001 L1137 1026.9 L1141 1019.4000000000001 L1137 1020.9000000000001 Z" fill="#8c8c8c"/><path d="M1569.8 898.9 L1573.8 906.4 L1577.8 898.9 L1573.8 900.4 Z" fill="#8c8c8c"/><path d="M1133 1019.4000000000001 L1137 1026.9 L1141 1019.4000000000001 L1137 1020.9000000000001 Z" fill="#8c8c8c"/></svg>
<svg style="position:absolute;left:1007px;top:303.9px;" width="260" height="57" viewBox="0 0 260 57"><rect x="0.8" y="0.8" width="258.4" height="55.4" rx="4.6" fill="#addbfe" stroke="#559edd" stroke-width="1.6"/></svg>
<svg style="position:absolute;left:1015.5px;top:312.9px;" width="14" height="14" viewBox="0 0 14 14"><rect x="0.8" y="0.8" width="12.4" height="11.6" rx="1.2" fill="none" stroke="#1d1d1d" stroke-width="1.2"/><path d="M0.8 1.6 H13.2" fill="none" stroke="#1d1d1d" stroke-width="1.6"/><path d="M0.8 4.6 H13.2 M0.8 8 H13.2 M4.8 1 V12.4 M9 1 V12.4" stroke="#1d1d1d" stroke-width="0.8" stroke-dasharray="1.6 1.2"/><circle cx="11.5" cy="11.2" r="2.4" fill="#1d1d1d"/></svg>
<div class="t" style="left:1033.30px;top:311.80px;font-size:13px;font-weight:400;color:#4a5059;letter-spacing:0.2px;">Data</div>
<svg style="position:absolute;left:1247px;top:312.29999999999995px;" width="8" height="16" viewBox="0 0 8 16"><circle cx="3.8" cy="3.4" r="1.05" fill="#222"/><circle cx="3.8" cy="7.5" r="1.05" fill="#222"/><circle cx="3.8" cy="11.4" r="1.05" fill="#222"/></svg>
<svg style="position:absolute;left:1242.6px;top:339.79999999999995px;" width="16" height="16" viewBox="0 0 16 16"><circle cx="8" cy="8" r="6.6" fill="#fff"/><circle cx="8" cy="8" r="5.6" fill="#0b7a10"/><path d="M5.2 8.1 L7.2 10.1 L10.9 5.9" fill="none" stroke="#fff" stroke-width="1.6"/></svg>
<svg style="position:absolute;left:1007px;top:424.4px;" width="260" height="57" viewBox="0 0 260 57"><rect x="0.8" y="0.8" width="258.4" height="55.4" rx="4.6" fill="#ffebae" stroke="#d9b14e" stroke-width="1.6"/></svg>
<svg style="position:absolute;left:1015.5px;top:433.4px;" width="14" height="14" viewBox="0 0 14 14"><path d="M0.8 1.3 Q7 -0.3 13.2 1.3 L8.6 7.2 V12.2 Q7 13.6 5.4 12.2 V7.2 Z" fill="none" stroke="#1d1d1d" stroke-width="1.2" stroke-linejoin="round"/></svg>
<div class="t" style="left:1033.30px;top:432.30px;font-size:13px;font-weight:400;color:#4a5059;letter-spacing:0.44px;">Filtering</div>
<svg style="position:absolute;left:1247px;top:432.79999999999995px;" width="8" height="16" viewBox="0 0 8 16"><circle cx="3.8" cy="3.4" r="1.05" fill="#222"/><circle cx="3.8" cy="7.5" r="1.05" fill="#222"/><circle cx="3.8" cy="11.4" r="1.05" fill="#222"/></svg>
<svg style="position:absolute;left:1242.6px;top:460.29999999999995px;" width="16" height="16" viewBox="0 0 16 16"><circle cx="8" cy="8" r="6.6" fill="#fff"/><circle cx="8" cy="8" r="5.6" fill="#0b7a10"/><path d="M5.2 8.1 L7.2 10.1 L10.9 5.9" fill="none" stroke="#fff" stroke-width="1.6"/></svg>
<svg style="position:absolute;left:1298.2px;top:424.4px;" width="260" height="57" viewBox="0 0 260 57"><rect x="0.8" y="0.8" width="258.4" height="55.4" rx="4.6" fill="#ffebae" stroke="#d9b14e" stroke-width="1.6"/></svg>
<svg style="position:absolute;left:1306.7px;top:433.4px;" width="14" height="14" viewBox="0 0 14 14"><rect x="0.6" y="4" width="8" height="7.8" rx="1.2" fill="none" stroke="#1d1d1d" stroke-width="1.2"/><path d="M0.6 6.2 H8 M0.6 9 H8 M3.4 4 V12" stroke="#1d1d1d" stroke-width="0.8" stroke-dasharray="1.4 1"/><path d="M3.5 13.5 H12.8 V10.5" fill="none" stroke="#1d1d1d" stroke-width="1.6"/><circle cx="8.6" cy="3.4" r="2.4" fill="#1d1d1d"/><circle cx="8.6" cy="3.4" r="0.9" fill="#555"/><path d="M10.2 5 L12.8 7.4" fill="none" stroke="#1d1d1d" stroke-width="1.5"/></svg>
<div class="t" style="left:1324.50px;top:432.30px;font-size:13px;font-weight:400;color:#4a5059;letter-spacing:0.2px;">Data Exploration</div>
<svg style="position:absolute;left:1538.2px;top:432.79999999999995px;" width="8" height="16" viewBox="0 0 8 16"><circle cx="3.8" cy="3.4" r="1.05" fill="#222"/><circle cx="3.8" cy="7.5" r="1.05" fill="#222"/><circle cx="3.8" cy="11.4" r="1.05" fill="#222"/></svg>
<svg style="position:absolute;left:1533.8px;top:460.29999999999995px;" width="16" height="16" viewBox="0 0 16 16"><circle cx="8" cy="8" r="6.6" fill="#fff"/><circle cx="8" cy="8" r="5.6" fill="#0b7a10"/><path d="M5.2 8.1 L7.2 10.1 L10.9 5.9" fill="none" stroke="#fff" stroke-width="1.6"/></svg>
<svg style="position:absolute;left:1007px;top:544.9px;" width="260" height="57" viewBox="0 0 260 57"><rect x="0.8" y="0.8" width="258.4" height="55.4" rx="4.6" fill="#ffebae" stroke="#d9b14e" stroke-width="1.6"/></svg>
<svg style="position:absolute;left:1015.5px;top:553.9px;" width="14" height="14" viewBox="0 0 14 14"><path d="M10.6 1.8 Q9.4 0.4 7.9 1.3 Q6.9 2 6.5 4 L5.2 10.4 Q4.7 13.3 2.6 13.3 Q1.1 13.3 0.5 12.2" fill="none" stroke="#1d1d1d" stroke-width="1.45"/><path d="M4.3 5 H9" fill="none" stroke="#1d1d1d" stroke-width="1.1"/><path d="M8.3 7.2 Q7 9.8 8.3 12.6 M12.3 7.2 Q13.6 9.8 12.3 12.6" fill="none" stroke="#1d1d1d" stroke-width="1"/><circle cx="10.3" cy="9.9" r="0.75" fill="#1d1d1d"/></svg>
<div class="t" style="left:1033.30px;top:552.80px;font-size:13px;font-weight:400;color:#4a5059;letter-spacing:0.2px;">Transformations</div>
<svg style="position:absolute;left:1247px;top:553.3px;" width="8" height="16" viewBox="0 0 8 16"><circle cx="3.8" cy="3.4" r="1.05" fill="#222"/><circle cx="3.8" cy="7.5" r="1.05" fill="#222"/><circle cx="3.8" cy="11.4" r="1.05" fill="#222"/></svg>
<svg style="position:absolute;left:1242.6px;top:580.8px;" width="16" height="16" viewBox="0 0 16 16"><circle cx="8" cy="8" r="6.6" fill="#fff"/><circle cx="8" cy="8" r="5.6" fill="#0b7a10"/><path d="M5.2 8.1 L7.2 10.1 L10.9 5.9" fill="none" stroke="#fff" stroke-width="1.6"/></svg>
<svg style="position:absolute;left:1007px;top:665.4px;" width="260" height="57" viewBox="0 0 260 57"><rect x="0.8" y="0.8" width="258.4" height="55.4" rx="4.6" fill="#ffebae" stroke="#d9b14e" stroke-width="1.6"/></svg>
<svg style="position:absolute;left:1015.5px;top:674.4px;" width="14" height="14" viewBox="0 0 14 14"><path d="M3 0.9 H11" fill="none" stroke="#1d1d1d" stroke-width="1.2"/><path d="M0.8 2.6 H13.2" fill="none" stroke="#1d1d1d" stroke-width="1.1"/><circle cx="1.8" cy="4.8" r="0.75" fill="#1d1d1d"/><circle cx="4.4" cy="4.8" r="0.75" fill="#1d1d1d"/><circle cx="7" cy="4.8" r="0.75" fill="#1d1d1d"/><circle cx="9.6" cy="4.8" r="0.75" fill="#1d1d1d"/><circle cx="12.2" cy="4.8" r="0.75" fill="#1d1d1d"/><circle cx="3.6" cy="7.4" r="0.75" fill="#1d1d1d"/><circle cx="6.2" cy="7.4" r="0.75" fill="#1d1d1d"/><circle cx="8.8" cy="7.4" r="0.75" fill="#1d1d1d"/><circle cx="5.2" cy="10" r="0.75" fill="#1d1d1d"/><circle cx="7.8" cy="10" r="0.75" fill="#1d1d1d"/><path d="M2.5 13 H11.5" fill="none" stroke="#1d1d1d" stroke-width="1.2"/></svg>
<div class="t" style="left:1033.30px;top:673.30px;font-size:13px;font-weight:400;color:#4a5059;letter-spacing:0.32px;">Interactive Grouping</div>
<svg style="position:absolute;left:1247px;top:673.8px;" width="8" height="16" viewBox="0 0 8 16"><circle cx="3.8" cy="3.4" r="1.05" fill="#222"/><circle cx="3.8" cy="7.5" r="1.05" fill="#222"/><circle cx="3.8" cy="11.4" r="1.05" fill="#222"/></svg>
<svg style="position:absolute;left:1242.6px;top:701.3px;" width="16" height="16" viewBox="0 0 16 16"><circle cx="8" cy="8" r="6.6" fill="#fff"/><circle cx="8" cy="8" r="5.6" fill="#0b7a10"/><path d="M5.2 8.1 L7.2 10.1 L10.9 5.9" fill="none" stroke="#fff" stroke-width="1.6"/></svg>
<svg style="position:absolute;left:1007px;top:785.9px;" width="260" height="57" viewBox="0 0 260 57"><rect x="0.8" y="0.8" width="258.4" height="55.4" rx="4.6" fill="#ffebae" stroke="#d9b14e" stroke-width="1.6"/></svg>
<svg style="position:absolute;left:1015.5px;top:794.9px;" width="14" height="14" viewBox="0 0 14 14"><rect x="0.7" y="0.8" width="12.6" height="12" rx="1.5" fill="none" stroke="#1d1d1d" stroke-width="1.4"/><path d="M0.7 1.8 H13.3" fill="none" stroke="#1d1d1d" stroke-width="1.8"/><path d="M0.7 5.2 H13.3 M0.7 8.8 H13.3 M4.8 0.8 V12.8 M9.2 0.8 V12.8" fill="none" stroke="#1d1d1d" stroke-width="1.1"/></svg>
<div class="t" style="left:1033.30px;top:793.80px;font-size:13px;font-weight:400;color:#4a5059;letter-spacing:0.28px;">Manage Variables</div>
<svg style="position:absolute;left:1247px;top:794.3px;" width="8" height="16" viewBox="0 0 8 16"><circle cx="3.8" cy="3.4" r="1.05" fill="#222"/><circle cx="3.8" cy="7.5" r="1.05" fill="#222"/><circle cx="3.8" cy="11.4" r="1.05" fill="#222"/></svg>
<svg style="position:absolute;left:1242.6px;top:821.8px;" width="16" height="16" viewBox="0 0 16 16"><circle cx="8" cy="8" r="6.6" fill="#fff"/><circle cx="8" cy="8" r="5.6" fill="#0b7a10"/><path d="M5.2 8.1 L7.2 10.1 L10.9 5.9" fill="none" stroke="#fff" stroke-width="1.6"/></svg>
<svg style="position:absolute;left:570.7px;top:906.4px;" width="260" height="57" viewBox="0 0 260 57"><rect x="0.8" y="0.8" width="258.4" height="55.4" rx="4.6" fill="#d5c9fd" stroke="#8c75d8" stroke-width="1.6"/></svg>
<svg style="position:absolute;left:579.2px;top:915.4px;" width="14" height="14" viewBox="0 0 14 14"><circle cx="5.05" cy="1.9" r="1.45" fill="none" stroke="#1d1d1d" stroke-width="1.15"/><circle cx="2.2" cy="5.7" r="1.45" fill="none" stroke="#1d1d1d" stroke-width="1.15"/><path d="M6.7 4.7 L7.9 4.1" fill="none" stroke="#1d1d1d" stroke-width="1.1"/><circle cx="8.8" cy="7.25" r="1.75" fill="#1d1d1d"/><circle cx="6" cy="11.15" r="1.75" fill="#1d1d1d"/><circle cx="11.5" cy="11.15" r="1.75" fill="#1d1d1d"/></svg>
<div class="t" style="left:597.00px;top:914.30px;font-size:13px;font-weight:400;color:#4a5059;letter-spacing:-0.1px;">Forest</div>
<svg style="position:absolute;left:810.7px;top:914.8px;" width="8" height="16" viewBox="0 0 8 16"><circle cx="3.8" cy="3.4" r="1.05" fill="#222"/><circle cx="3.8" cy="7.5" r="1.05" fill="#222"/><circle cx="3.8" cy="11.4" r="1.05" fill="#222"/></svg>
<svg style="position:absolute;left:806.3000000000001px;top:942.3px;" width="16" height="16" viewBox="0 0 16 16"><circle cx="8" cy="8" r="6.6" fill="#fff"/><circle cx="8" cy="8" r="5.6" fill="#0b7a10"/><path d="M5.2 8.1 L7.2 10.1 L10.9 5.9" fill="none" stroke="#fff" stroke-width="1.6"/></svg>
<svg style="position:absolute;left:577.7px;top:944.4px;" width="12" height="12" viewBox="0 0 12 12"><path d="M6 1.2 L7.3 4.6 L10.8 4.7 L8.1 6.9 L9.1 10.4 L6 8.4 L2.9 10.4 L3.9 6.9 L1.2 4.7 L4.7 4.6 Z" fill="#1d1d1d"/></svg>
<svg style="position:absolute;left:861.9000000000001px;top:906.4px;" width="260" height="57" viewBox="0 0 260 57"><rect x="0.8" y="0.8" width="258.4" height="55.4" rx="4.6" fill="#d5c9fd" stroke="#8c75d8" stroke-width="1.6"/></svg>
<svg style="position:absolute;left:870.4000000000001px;top:915.4px;" width="14" height="14" viewBox="0 0 14 14"><path d="M3 1.8 L1.1 7.3 M6.9 4 L5 9.5 M9.6 7.5 L7.6 12.3 M9.6 7.5 L11.8 12.3" fill="none" stroke="#1d1d1d" stroke-width="1.3"/><circle cx="3" cy="1.8" r="1.35" fill="#1d1d1d"/><circle cx="1.1" cy="7.3" r="1.35" fill="#1d1d1d"/><circle cx="6.9" cy="4" r="1.35" fill="#1d1d1d"/><circle cx="5" cy="9.5" r="1.35" fill="#1d1d1d"/><circle cx="9.6" cy="7.3" r="1.35" fill="#1d1d1d"/><circle cx="7.6" cy="12.3" r="1.35" fill="#1d1d1d"/><circle cx="11.8" cy="12.3" r="1.35" fill="#1d1d1d"/></svg>
<div class="t" style="left:888.20px;top:914.30px;font-size:13px;font-weight:400;color:#4a5059;letter-spacing:0.32px;">Gradient Boosting</div>
<svg style="position:absolute;left:1101.9px;top:914.8px;" width="8" height="16" viewBox="0 0 8 16"><circle cx="3.8" cy="3.4" r="1.05" fill="#222"/><circle cx="3.8" cy="7.5" r="1.05" fill="#222"/><circle cx="3.8" cy="11.4" r="1.05" fill="#222"/></svg>
<svg style="position:absolute;left:1097.5px;top:942.3px;" width="16" height="16" viewBox="0 0 16 16"><circle cx="8" cy="8" r="6.6" fill="#fff"/><circle cx="8" cy="8" r="5.6" fill="#0b7a10"/><path d="M5.2 8.1 L7.2 10.1 L10.9 5.9" fill="none" stroke="#fff" stroke-width="1.6"/></svg>
<svg style="position:absolute;left:1153.1px;top:906.4px;" width="260" height="57" viewBox="0 0 260 57"><rect x="0.8" y="0.8" width="258.4" height="55.4" rx="4.6" fill="#d5c9fd" stroke="#8c75d8" stroke-width="1.6"/></svg>
<svg style="position:absolute;left:1161.6px;top:915.4px;" width="14" height="14" viewBox="0 0 14 14"><path d="M4.8 11.4 H2 Q0.6 11.4 0.6 10 V2 Q0.6 0.7 2 0.7 H8.4 Q9.8 0.7 9.8 2 V5.6" fill="none" stroke="#1d1d1d" stroke-width="1.2"/><path d="M0.6 1.6 H9.8" fill="none" stroke="#1d1d1d" stroke-width="1.8"/><path d="M1.4 4.2 H9 M1.4 7.2 H4.5 M3.7 3.5 V10.5" stroke="#1d1d1d" stroke-width="0.9" stroke-dasharray="1.3 1"/><path d="M5.6 12.8 Q4.8 10.4 5.9 8.9 M12.4 12.8 Q13.2 10.4 12.1 8.9" fill="none" stroke="#1d1d1d" stroke-width="1.2"/><path d="M7.1 7.4 H10.9" fill="none" stroke="#1d1d1d" stroke-width="1.2"/><circle cx="9" cy="10.9" r="1.5" fill="#1d1d1d"/></svg>
<div class="t" style="left:1179.40px;top:914.30px;font-size:13px;font-weight:400;color:#4a5059;letter-spacing:0.2px;">Scorecard</div>
<svg style="position:absolute;left:1393.1px;top:914.8px;" width="8" height="16" viewBox="0 0 8 16"><circle cx="3.8" cy="3.4" r="1.05" fill="#222"/><circle cx="3.8" cy="7.5" r="1.05" fill="#222"/><circle cx="3.8" cy="11.4" r="1.05" fill="#222"/></svg>
<svg style="position:absolute;left:1388.6999999999998px;top:942.3px;" width="16" height="16" viewBox="0 0 16 16"><circle cx="8" cy="8" r="6.6" fill="#fff"/><circle cx="8" cy="8" r="5.6" fill="#0b7a10"/><path d="M5.2 8.1 L7.2 10.1 L10.9 5.9" fill="none" stroke="#fff" stroke-width="1.6"/></svg>
<svg style="position:absolute;left:1444.3px;top:906.4px;" width="260" height="57" viewBox="0 0 260 57"><rect x="0.8" y="0.8" width="258.4" height="55.4" rx="4.6" fill="#d5c9fd" stroke="#8c75d8" stroke-width="1.6"/></svg>
<svg style="position:absolute;left:1452.8px;top:915.4px;" width="14" height="14" viewBox="0 0 14 14"><path d="M0.7 0 V13.2 H13.6" fill="none" stroke="#1d1d1d" stroke-width="1.3"/><circle cx="4.5" cy="1.5" r="0.85" fill="#1d1d1d"/><circle cx="4.5" cy="4.2" r="0.85" fill="#1d1d1d"/><circle cx="4.5" cy="6.9" r="0.85" fill="#1d1d1d"/><circle cx="4.5" cy="9.6" r="0.85" fill="#1d1d1d"/><circle cx="4.5" cy="11.8" r="0.85" fill="#1d1d1d"/><circle cx="9.8" cy="1.2" r="0.85" fill="#1d1d1d"/><circle cx="9.8" cy="3.9" r="0.85" fill="#1d1d1d"/><circle cx="9.8" cy="6.6" r="0.85" fill="#1d1d1d"/><circle cx="9.8" cy="9.3" r="0.85" fill="#1d1d1d"/><circle cx="9.8" cy="11.8" r="0.85" fill="#1d1d1d"/></svg>
<div class="t" style="left:1470.60px;top:914.30px;font-size:13px;font-weight:400;color:#4a5059;letter-spacing:0.18px;">Python Gradient Boosting</div>
<svg style="position:absolute;left:1684.3px;top:914.8px;" width="8" height="16" viewBox="0 0 8 16"><circle cx="3.8" cy="3.4" r="1.05" fill="#222"/><circle cx="3.8" cy="7.5" r="1.05" fill="#222"/><circle cx="3.8" cy="11.4" r="1.05" fill="#222"/></svg>
<svg style="position:absolute;left:1679.8999999999999px;top:942.3px;" width="16" height="16" viewBox="0 0 16 16"><circle cx="8" cy="8" r="6.6" fill="#fff"/><circle cx="8" cy="8" r="5.6" fill="#0b7a10"/><path d="M5.2 8.1 L7.2 10.1 L10.9 5.9" fill="none" stroke="#fff" stroke-width="1.6"/></svg>
<svg style="position:absolute;left:1007px;top:1026.9px;" width="260" height="57" viewBox="0 0 260 57"><rect x="0.8" y="0.8" width="258.4" height="55.4" rx="4.6" fill="#addbfe" stroke="#559edd" stroke-width="1.6"/></svg>
<svg style="position:absolute;left:1015.5px;top:1035.9px;" width="14" height="14" viewBox="0 0 14 14"><circle cx="1.6" cy="1.8" r="1.15" fill="#1d1d1d"/><circle cx="2.5" cy="7.2" r="1.15" fill="#1d1d1d"/><circle cx="6.9" cy="11.9" r="1.15" fill="#1d1d1d"/><circle cx="5.6" cy="6.6" r="1.15" fill="#1d1d1d"/><path d="M1.6 1.8 L2.5 7.2 M1.6 1.8 L4.2 2.9 M5.6 6.6 L6.9 11.9 L11.4 8.2 M5.6 6.6 L10.8 8" fill="none" stroke="#1d1d1d" stroke-width="1"/><circle cx="8.8" cy="2.9" r="2.4" fill="#1d1d1d"/><circle cx="8.8" cy="2.9" r="0.9" fill="#555"/><path d="M10.4 4.6 L12.4 6.8" fill="none" stroke="#1d1d1d" stroke-width="1.4"/></svg>
<div class="t" style="left:1033.30px;top:1034.80px;font-size:13px;font-weight:400;color:#4a5059;letter-spacing:0.46px;">Model Comparison</div>
<svg style="position:absolute;left:1247px;top:1035.3000000000002px;" width="8" height="16" viewBox="0 0 8 16"><circle cx="3.8" cy="3.4" r="1.05" fill="#222"/><circle cx="3.8" cy="7.5" r="1.05" fill="#222"/><circle cx="3.8" cy="11.4" r="1.05" fill="#222"/></svg>
<svg style="position:absolute;left:1242.6px;top:1062.8000000000002px;" width="16" height="16" viewBox="0 0 16 16"><circle cx="8" cy="8" r="6.6" fill="#fff"/><circle cx="8" cy="8" r="5.6" fill="#0b7a10"/><path d="M5.2 8.1 L7.2 10.1 L10.9 5.9" fill="none" stroke="#fff" stroke-width="1.6"/></svg>
</body></html>
